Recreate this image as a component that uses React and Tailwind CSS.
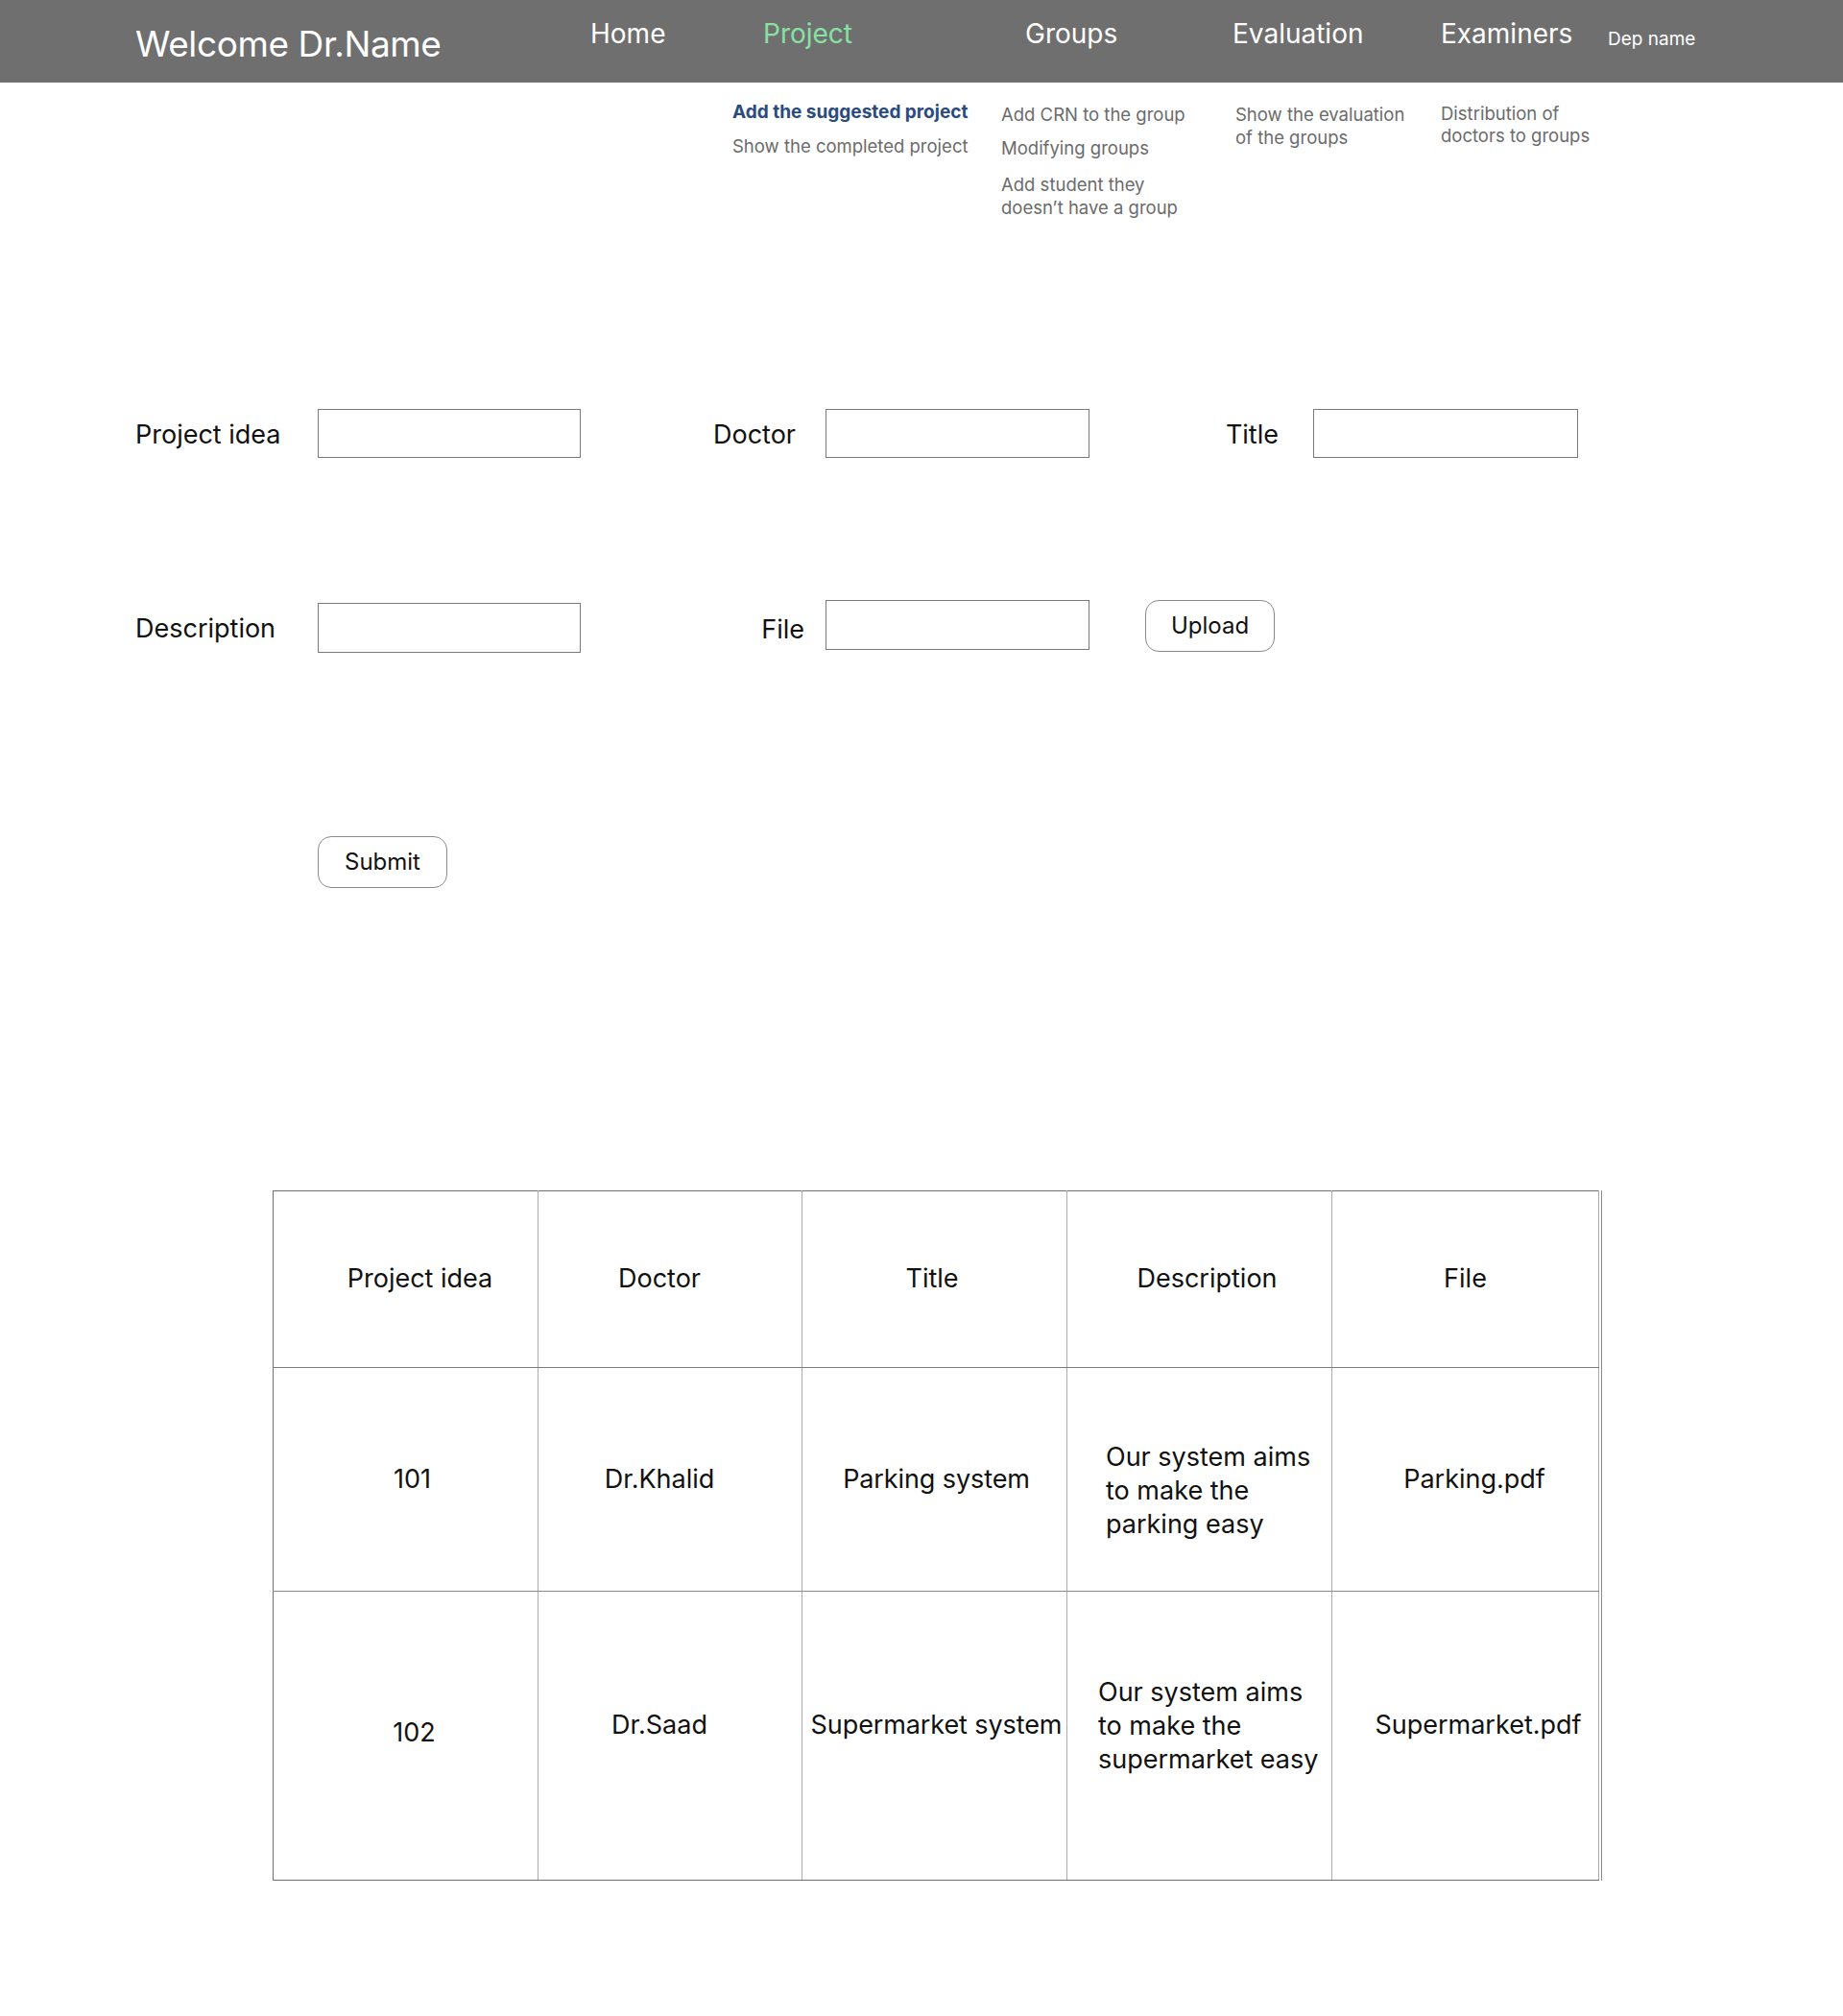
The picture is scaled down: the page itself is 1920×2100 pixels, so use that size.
import React from 'react';

const navItems = [
  { label: 'Home', w: 'w-[180px]', active: false },
  { label: 'Project', w: 'w-[273px]', active: true },
  { label: 'Groups', w: 'w-[216px]', active: false },
  { label: 'Evaluation', w: 'w-[217px]', active: false },
  { label: 'Examiners', w: 'w-[174px]', active: false },
];

const headers = [
  { label: 'Project idea', pad: 'pl-[30px]' },
  { label: 'Doctor', pad: 'pr-[22px]' },
  { label: 'Title', pad: 'pr-[5px]' },
  { label: 'Description', pad: 'pl-[16px]' },
  { label: 'File', pad: '' },
];

const rows = [
  {
    id: '101',
    doctor: 'Dr.Khalid',
    title: 'Parking system',
    desc: ['Our system aims', 'to make the', 'parking easy'],
    file: 'Parking.pdf',
    h: 'h-[233px]',
    idPad: 'pl-[14px]',
    filePad: 'pl-[19px]',
    vPad: '',
    descPad: 'pl-[40px] pt-[22px]',
  },
  {
    id: '102',
    doctor: 'Dr.Saad',
    title: 'Supermarket system',
    desc: ['Our system aims', 'to make the', 'supermarket easy'],
    file: 'Supermarket.pdf',
    h: 'h-[301px]',
    idPad: 'pl-[18px] pb-[6px]',
    filePad: 'pl-[27px] pb-[22px]',
    vPad: 'pb-[22px]',
    descPad: 'pl-[32px] pb-[22px]',
  },
];

function Field({ className = '' }) {
  return (
    <input
      type="text"
      className={`h-[51px] border-[1.5px] border-[#7a7a7a] bg-white outline-none ${className}`}
    />
  );
}

function Button({ children }) {
  return (
    <button className="w-[135px] h-[54px] rounded-[14px] border border-[#8a8a8a] bg-white text-[24px] text-[#111]">
      {children}
    </button>
  );
}

export default function App() {
  return (
    <div className="min-h-[2100px] w-[1920px] bg-white font-['Inter','Liberation_Sans',sans-serif] text-[#111]">
      {/* top bar */}
      <header className="h-[86px] bg-[#6f6f6f] flex items-start pl-[141px] text-white">
        <div className="w-[474px] pt-[23px] text-[37px] leading-[46px] tracking-[-0.4px]">
          Welcome Dr.Name
        </div>
        {navItems.map((item) => (
          <div
            key={item.label}
            className={`${item.w} pt-[17px] text-[28px] leading-[36px] ${
              item.active ? 'text-[#88e0a3]' : 'text-white'
            }`}
          >
            {item.label}
          </div>
        ))}
        <div className="pt-[29px] text-[19px] leading-[24px]">Dep name</div>
      </header>

      {/* sub menu */}
      <div className="h-[340px] pt-[19px] pl-[763px] flex items-start text-[18.5px] leading-[24px] text-[#6b6b6b]">
        <div className="w-[280px] flex flex-col gap-[11px]">
          <span className="font-bold text-[19px] text-[#2b4a7e]">Add the suggested project</span>
          <span>Show the completed project</span>
        </div>
        <div className="w-[244px] pt-[2px] flex flex-col">
          <span>Add CRN to the group</span>
          <span className="mt-[11px]">Modifying groups</span>
          <span className="mt-[14px]">
            Add student they
            <br />
            doesn’t have a group
          </span>
        </div>
        <div className="w-[214px] pt-[2px]">
          Show the evaluation
          <br />
          of the groups
        </div>
        <div className="pt-[2px] leading-[23px]">
          Distribution of
          <br />
          doctors to groups
        </div>
      </div>

      {/* form */}
      <div className="pl-[141px] flex items-center text-[27px]">
        <label className="w-[190px] pt-[3px]">Project idea</label>
        <Field className="w-[274px]" />
        <label className="w-[255px] text-right pr-[31px] pt-[3px]">Doctor</label>
        <Field className="w-[275px]" />
        <label className="w-[233px] text-right pr-[36px] pt-[3px]">Title</label>
        <Field className="w-[276px]" />
      </div>

      <div className="mt-[148px] pl-[141px] flex items-start text-[27px]">
        <label className="w-[190px] h-[50px] mt-[5px] leading-[50px]">Description</label>
        <Field className="w-[274px] h-[52px] mt-[3px]" />
        <label className="w-[255px] h-[50px] mt-[6px] leading-[50px] text-right pr-[22px]">File</label>
        <Field className="w-[275px] h-[52px]" />
        <div className="ml-[58px]">
          <Button>Upload</Button>
        </div>
      </div>

      <div className="mt-[190px] pl-[331px]">
        <Button>Submit</Button>
      </div>

      {/* table */}
      <div className="mt-[315px] ml-[284px] w-[1385px] border-r border-[#8a8a8a]">
        <table className="border-collapse text-[27px] table-fixed w-[1381px]">
          <colgroup>
            <col className="w-[276px]" />
            <col className="w-[275px]" />
            <col className="w-[276px]" />
            <col className="w-[276px]" />
            <col className="w-[278px]" />
          </colgroup>
          <thead>
            <tr className="h-[184px]">
              {headers.map((h) => (
                <th
                  key={h.label}
                  className={`${h.pad} font-normal text-center border-t-[1.5px] border-t-[#707070] border-b border-b-[#7c7c7c] border-x border-x-[#ababab] first:border-l-[1.5px] first:border-l-[#707070]`}
                >
                  {h.label}
                </th>
              ))}
            </tr>
          </thead>
          <tbody>
            {rows.map((r, i) => {
              const bottom =
                i === rows.length - 1
                  ? 'border-b-[1.5px] border-b-[#707070]'
                  : 'border-b border-b-[#8a8a8a]';
              return (
                <tr key={r.id} className={r.h}>
                  <td
                    className={`text-center ${r.idPad} border-l-[1.5px] border-l-[#707070] border-r border-r-[#ababab] ${bottom}`}
                  >
                    {r.id}
                  </td>
                  <td className={`text-center pr-[22px] ${r.vPad} border-x border-x-[#ababab] ${bottom}`}>
                    {r.doctor}
                  </td>
                  <td
                    className={`text-center pl-[4px] ${r.vPad} border-x border-x-[#ababab] tracking-[-0.1px] ${bottom}`}
                  >
                    {r.title}
                  </td>
                  <td
                    className={`text-left ${r.descPad} leading-[35px] border-x border-x-[#ababab] ${bottom}`}
                  >
                    {r.desc.map((line, k) => (
                      <React.Fragment key={k}>
                        {line}
                        {k < r.desc.length - 1 && <br />}
                      </React.Fragment>
                    ))}
                  </td>
                  <td className={`text-center ${r.filePad} border-x border-x-[#ababab] ${bottom}`}>
                    {r.file}
                  </td>
                </tr>
              );
            })}
          </tbody>
        </table>
      </div>
    </div>
  );
}
